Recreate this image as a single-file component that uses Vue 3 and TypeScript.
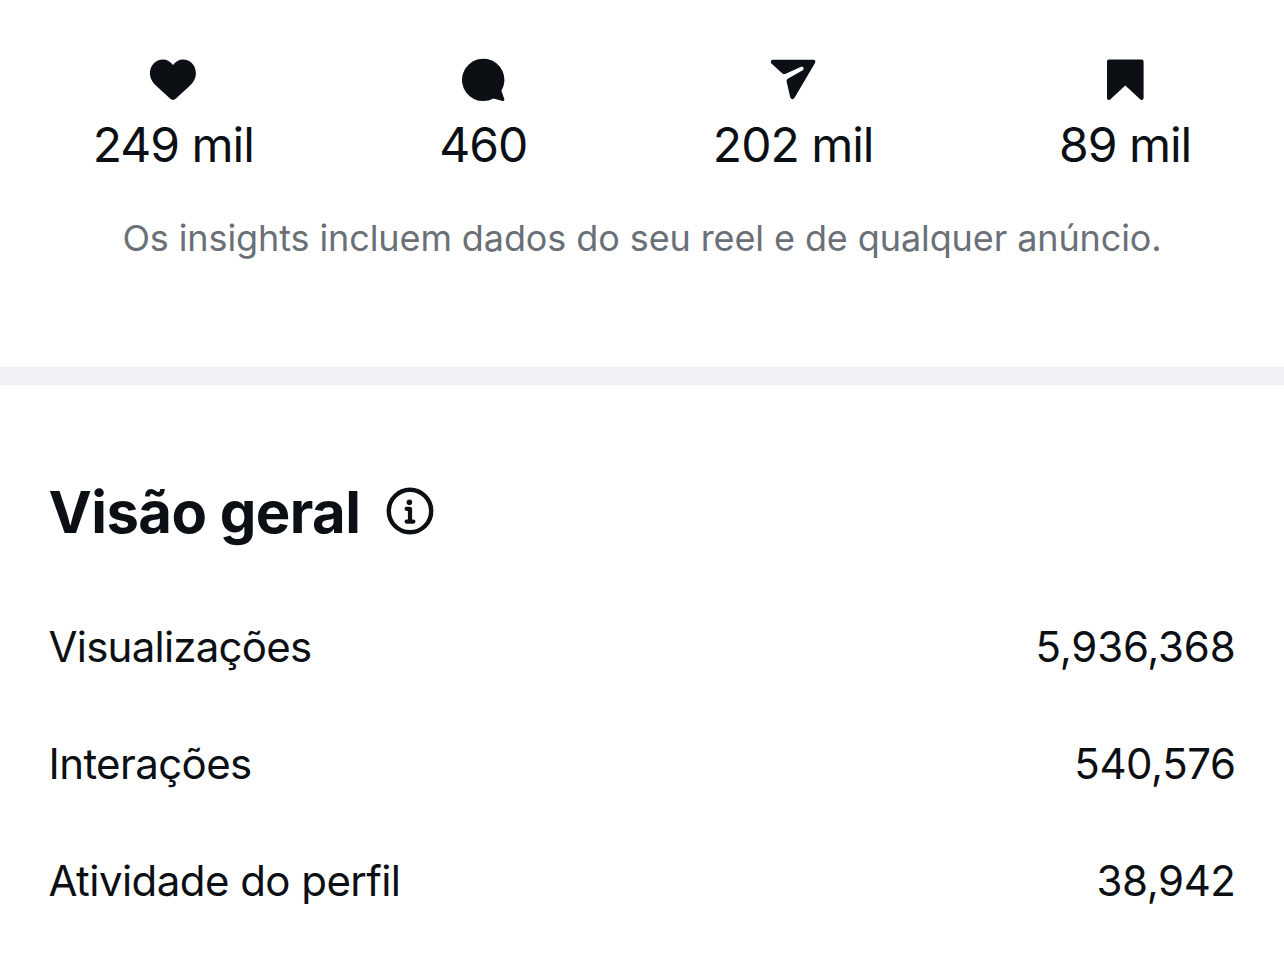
<script setup lang="ts">
interface Stat {
  icon: 'heart' | 'comment' | 'share' | 'save'
  value: string
}

interface Metric {
  id: string
  label: string
  value: string
}

const stats: Stat[] = [
  { icon: 'heart', value: '249 mil' },
  { icon: 'comment', value: '460' },
  { icon: 'share', value: '202 mil' },
  { icon: 'save', value: '89 mil' },
]

const metrics: Metric[] = [
  { id: 'views', label: 'Visualizações', value: '5,936,368' },
  { id: 'interactions', label: 'Interações', value: '540,576' },
  { id: 'profile', label: 'Atividade do perfil', value: '38,942' },
]
</script>

<template>
  <main class="insights">
    <section class="summary">
      <ul class="stats">
        <li v-for="stat in stats" :key="stat.icon" class="stat" :class="stat.icon">
          <svg class="stat-icon" viewBox="0 0 48 48" aria-hidden="true">
            <path
              v-if="stat.icon === 'heart'"
              d="M24 9C21.5 5.5 18 3.5 14 3.5C6.7 3.5 .9 9.5 .9 17.2C.9 22.8 4.1 27 8.5 31L21 42.6Q24 45.2 27 42.6L39.5 31C43.9 27 46.9 22.8 46.9 17.2C46.9 9.5 41.3 3.5 34 3.5C30 3.5 26.5 5.5 24 9Z"
            />
            <path
              v-else-if="stat.icon === 'comment'"
              d="M42.4 34.8A21.2 21.2 0 1 0 34.4 42.5L43.6 44.9Q45.9 45.2 45.3 43Z"
            />
            <path
              v-else-if="stat.icon === 'share'"
              d="M3.9 3.8H44.4Q47.2 4.2 46 6.9L25.4 42Q22.9 44.6 21.3 41.6L17.6 25.4Q17.3 23.6 18.8 22.7L33.3 14.5C35.9 12.8 34.5 9.8 31.7 10.9L16.1 17.9Q14.7 18.5 13.4 17.4L2.4 7.4Q.6 4.4 3.9 3.8Z"
            />
            <path
              v-else
              d="M8 3.5H40.6Q42.6 3.5 42.6 5.5V42.3Q42 45.1 39.4 43.6L24.3 29.5L9.2 43.6Q6.6 45.1 6 42.3V5.5Q6 3.5 8 3.5Z"
            />
          </svg>
          <span class="stat-value">{{ stat.value }}</span>
        </li>
      </ul>
      <p class="note">Os insights incluem dados do seu reel e de qualquer anúncio.</p>
    </section>

    <section class="overview">
      <header class="heading">
        <h2>Visão geral</h2>
        <svg class="info" viewBox="0 0 48 48" aria-hidden="true">
          <circle cx="24" cy="24" r="21.2" class="ring" />
          <circle cx="23.4" cy="15.2" r="2.8" />
          <path d="M20.6 21.8H24V34.2M20.6 34.6H27.4" class="stem" />
        </svg>
      </header>
      <dl class="metrics">
        <div v-for="metric in metrics" :key="metric.id" class="metric">
          <dt :class="metric.id">{{ metric.label }}</dt>
          <dd :class="metric.id">{{ metric.value }}</dd>
        </div>
      </dl>
    </section>
  </main>
</template>

<style>
body {
  margin: 0;
  background: #fff;
}
</style>

<style scoped>
.insights {
  box-sizing: border-box;
  width: 100%;
  height: 957px;
  overflow: hidden;
  background: #fff;
  color: #0c1014;
  font-family: Inter, "Liberation Sans", sans-serif;
}

.summary {
  box-sizing: border-box;
  height: 385px;
  padding-top: 56px;
  border-bottom: 18px solid #f0f1f5;
}

.stats {
  display: flex;
  justify-content: space-around;
  margin: 0;
  padding: 0;
  list-style: none;
}

.stat {
  display: flex;
  flex-direction: column;
  align-items: center;
}

.stat-icon {
  display: block;
  width: 48px;
  height: 48px;
  fill: #0c1014;
}

.stat-value {
  margin-top: 11px;
  font-size: 48px;
  line-height: 60px;
  letter-spacing: -1px;
  white-space: nowrap;
}

.note {
  margin: 39px 0 0;
  color: #6a7078;
  font-size: 36px;
  line-height: 48px;
  letter-spacing: -0.1px;
  text-align: center;
  white-space: nowrap;
}

.overview {
  padding: 91px 48.5px 0 48.5px;
}

.heading {
  display: flex;
  align-items: center;
  gap: 26px;
  height: 72px;
}

.heading h2 {
  margin: 0;
  font-size: 58px;
  font-weight: 700;
  line-height: 72px;
  letter-spacing: -0.55px;
  white-space: nowrap;
}

.info {
  width: 48px;
  height: 48px;
  margin-bottom: 2px;
  fill: #0c1014;
}

.ring {
  fill: none;
  stroke: #0c1014;
  stroke-width: 4.4;
}

.stem {
  fill: none;
  stroke: #0c1014;
  stroke-width: 4.2;
  stroke-linecap: round;
  stroke-linejoin: round;
}

.metrics {
  display: flex;
  flex-direction: column;
  gap: 61px;
  margin: 71px 0 0;
}

.metric {
  display: flex;
  align-items: center;
  justify-content: space-between;
  height: 56px;
  font-size: 42px;
  line-height: 56px;
  white-space: nowrap;
}

.metric dt {
  letter-spacing: -0.55px;
}

.metric dt.views {
  letter-spacing: -0.75px;
}

.metric dt.interactions {
  letter-spacing: -0.6px;
}

.metric dd {
  margin: 0;
  letter-spacing: -0.45px;
}

.metric dd.views {
  letter-spacing: -0.2px;
}
</style>
